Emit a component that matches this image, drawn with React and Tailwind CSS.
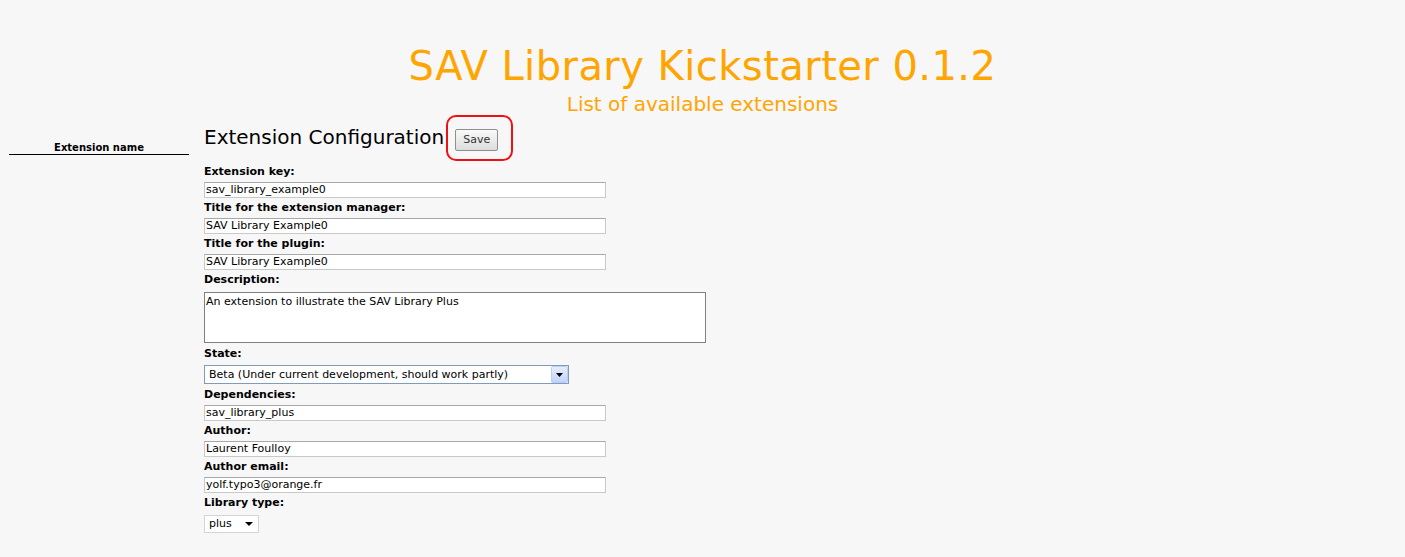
import React from "react";

const fields = [
  { label: "Extension key:", value: "sav_library_example0" },
  { label: "Title for the extension manager:", value: "SAV Library Example0" },
  { label: "Title for the plugin:", value: "SAV Library Example0" },
];

const people = [
  { label: "Dependencies:", value: "sav_library_plus" },
  { label: "Author:", value: "Laurent Foulloy" },
  { label: "Author email:", value: "yolf.typo3@orange.fr" },
];

const Label = ({ children }) => (
  <div className="h-4 leading-4 font-bold text-[11px] text-black">{children}</div>
);

const TextInput = ({ value }) => (
  <div className="h-4 w-[402px] bg-white border border-[#c9c9c9] border-t-[#a8a8a8] px-[1px] text-[11px] leading-[14px] text-black whitespace-nowrap overflow-hidden">
    {value}
  </div>
);

const App = () => {
  return (
    <div className="min-h-[557px] bg-[#f7f7f7] font-['DejaVu_Sans',Verdana,sans-serif] text-black">
      {/* Header */}
      <div className="pt-[40px] text-center text-[#ffa500]">
        <h1 className="text-[40px] leading-[52px] tracking-[0.45px]">SAV Library Kickstarter 0.1.2</h1>
        <p className="text-[20px] leading-[24px] tracking-[0px]">List of available extensions</p>
      </div>

      <div className="flex pl-[9px] pt-[7px]">
        {/* Left column */}
        <div className="w-[180px] pt-[19px]">
          <div className="text-center font-bold text-[10px] leading-[12px] border-b border-black">
            Extension name
          </div>
        </div>

        {/* Form */}
        <div className="ml-[15px]">
          <div className="flex items-start h-[48px] -mt-[2px]">
            <h2 className="text-[20px] leading-[24px] mt-[4px] tracking-[0px]">Extension Configuration</h2>
            <div className="flex ml-[2px] -mt-[6px] border-2 border-[#ee1111] rounded-[10px] pl-[7px] pr-[13px] pt-[12px] pb-[8px]">
              <button className="h-[22px] w-[43px] border border-[#8e8e8e] rounded-[2px] bg-gradient-to-b from-[#fafafa] to-[#dcdcdc] text-[11px] text-[#333]">
                Save
              </button>
            </div>
          </div>

          <div className="mt-[-5px]">
            {fields.map((f) => (
              <div key={f.label} className="mb-[2px]">
                <Label>{f.label}</Label>
                <div className="mt-[2px]">
                  <TextInput value={f.value} />
                </div>
              </div>
            ))}

            <Label>Description:</Label>
            <div className="mt-[4px] h-[51px] w-[502px] bg-white border border-[#808080] px-[1px] pt-[2px] text-[11px] leading-[14px]">
              An extension to illustrate the SAV Library Plus
            </div>

            <div className="mt-[3px]">
              <Label>State:</Label>
            </div>
            <div className="mt-[3px] flex h-[19px] w-[365px] bg-white border border-[#7f9db9]">
              <div className="flex-1 px-[4px] text-[11px] leading-[17px] whitespace-nowrap">
                Beta (Under current development, should work partly)
              </div>
              <div className="w-[17px] h-[17px] bg-gradient-to-b from-[#e6eefc] to-[#c1d3fb] border border-[#b9cdf5] rounded-[2px] flex items-center justify-center">
                <svg width="7" height="4" viewBox="0 0 7 4"><path d="M0 0h7L3.5 4z" fill="#000" /></svg>
              </div>
            </div>

            <div className="mt-[3px]">
              {people.map((f) => (
                <div key={f.label} className="mb-[2px]">
                  <Label>{f.label}</Label>
                  <div className="mt-[2px]">
                    <TextInput value={f.value} />
                  </div>
                </div>
              ))}
            </div>

            <Label>Library type:</Label>
            <div className="mt-[4px] flex items-center h-[18px] w-[55px] bg-white border border-[#d4d4d4] pl-[4px] pr-[5px] text-[11px]">
              <span className="flex-1">plus</span>
              <svg width="8" height="4" viewBox="0 0 8 4"><path d="M0 0h8L4 4z" fill="#000" /></svg>
            </div>
          </div>
        </div>
      </div>
    </div>
  );
};

export default App;
